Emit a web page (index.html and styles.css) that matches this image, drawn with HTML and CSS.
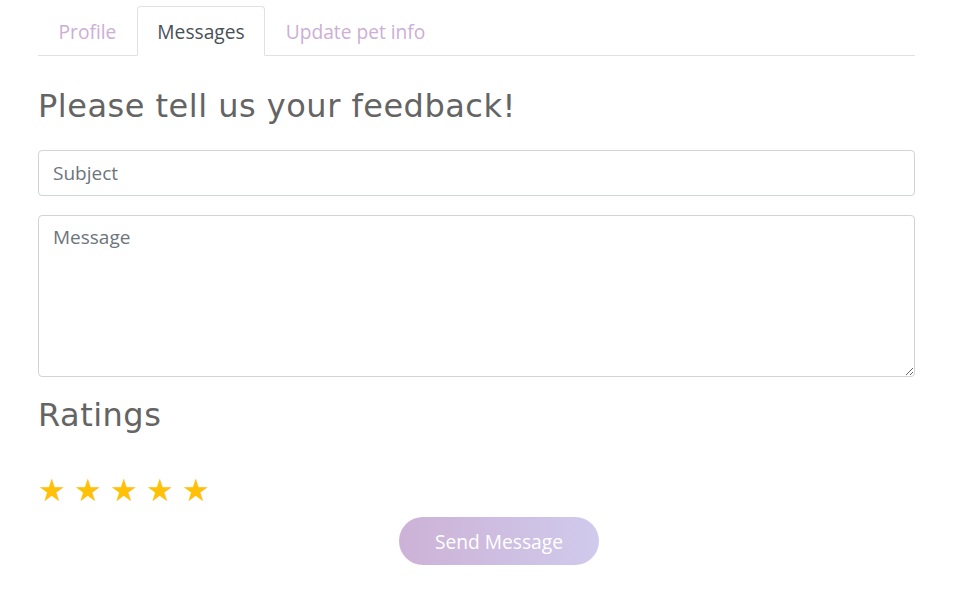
FILE: index.html
```html
<!DOCTYPE html>
<html>
<head>
<meta charset="utf-8">
<link rel="stylesheet" href="styles.css">
</head>
<body>
<div class="page">
  <ul class="tabs">
    <li class="tab">Profile</li>
    <li class="tab active">Messages</li>
    <li class="tab">Update pet info</li>
  </ul>
  <h2 class="title">Please tell us your feedback!</h2>
  <input class="field" type="text" placeholder="Subject">
  <textarea class="field area" placeholder="Message"></textarea>
  <h2 class="title ratings">Ratings</h2>
  <div class="stars">
    <span class="star">★</span><span class="star">★</span><span class="star">★</span><span class="star">★</span><span class="star">★</span>
  </div>
  <div class="actions"><button class="send">Send Message</button></div>
</div>
</body>
</html>
```
FILE: styles.css
```css
* { box-sizing: border-box; }
body { margin: 0; background: #fff; font-family: "Open Sans", sans-serif; }
.page { width: 877px; margin-left: 38px; padding-top: 6px; display: flex; flex-direction: column; }
.tabs { list-style: none; margin: 0; padding: 0; display: flex; border-bottom: 1px solid #dee2e6; }
.tab { padding: 0 19.5px; height: 50px; line-height: 50px; font-size: 19.2px; color: #cdaed6; border: 1px solid transparent; border-top-left-radius: 4px; border-top-right-radius: 4px; margin-bottom: -1px; }
.tab.active { color: #495057; border-color: #dee2e6 #dee2e6 #fff; background: #fff; }
.title { font-family: "DejaVu Sans", sans-serif; font-weight: 400; font-size: 32px; color: #646464; margin: 30px 0 0; line-height: 40px; letter-spacing: 0.5px; }
.field { display: block; width: 100%; border: 1px solid #ced4da; border-radius: 4px; font-family: "Open Sans", sans-serif; font-size: 19px; color: #495057; padding: 8px 14px; height: 46px; margin-top: 24px; }
.field::placeholder { color: #6c757d; }
.area { height: 162px; margin-top: 19px; resize: vertical; }
.ratings { margin-top: 18px; }
.stars { display: flex; gap: 10px; margin-top: 40px; }
.star { color: #ffc107; font-size: 31px; line-height: 30px; font-family: "DejaVu Sans", sans-serif; width: 26px; }
.actions { display: flex; justify-content: center; margin-top: 12px; padding-left: 45px; }
.send { width: 200px; height: 48px; border: none; border-radius: 24px; background: linear-gradient(90deg, #ccb2d6, #d0caec); color: #fff; font-family: "Open Sans", sans-serif; font-size: 19.2px; padding-top: 2px; }
```
